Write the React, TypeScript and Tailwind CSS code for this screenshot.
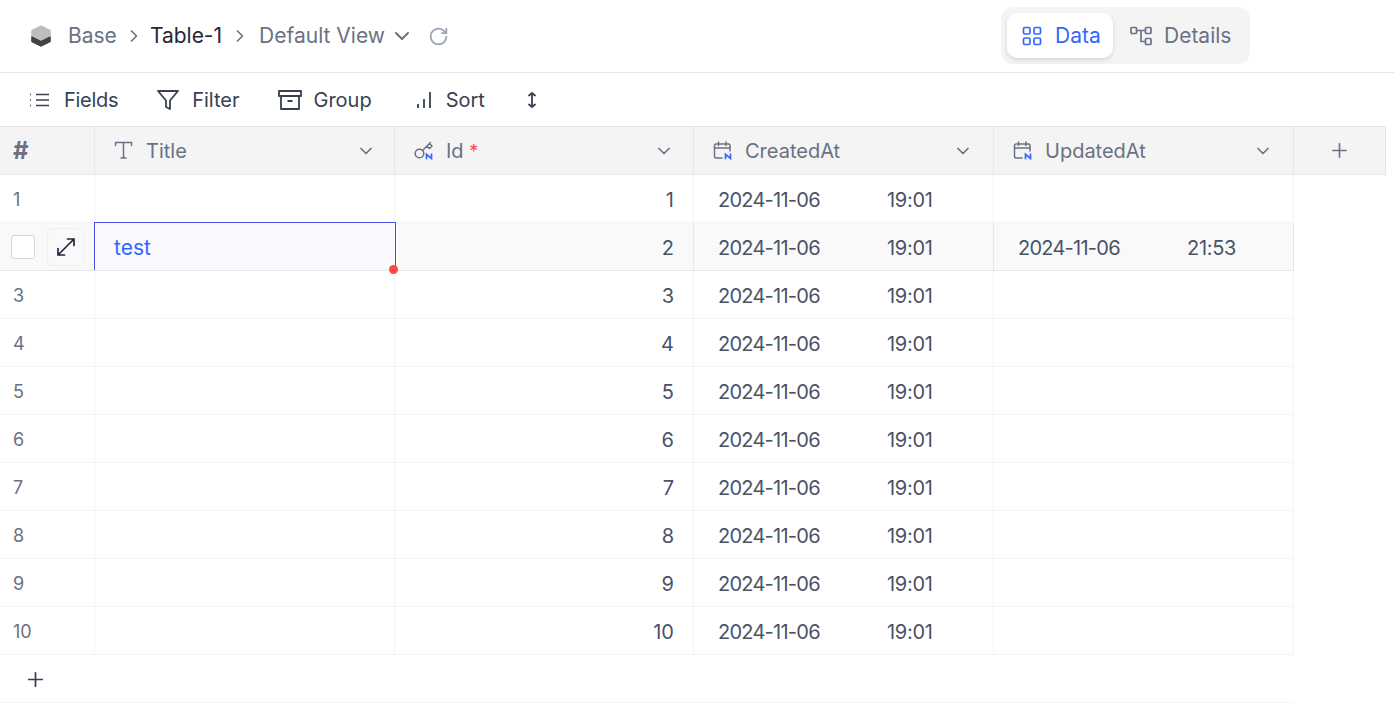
import type { ReactNode } from "react";
import { ChevronDown, ChevronRight, Plus, RotateCw } from "lucide-react";

const rows = [1, 2, 3, 4, 5, 6, 7, 8, 9, 10];

function TableIcon({ children }: { children: ReactNode }) {
  return (
    <svg width="22" height="22" viewBox="0 0 22 22" fill="none" stroke="#6a7184" strokeWidth="1.5" strokeLinecap="round" strokeLinejoin="round" className="shrink-0">
      {children}
    </svg>
  );
}

function BlueN() {
  return (
    <path d="M12.500 18.500v-4.200l5 4.200v-4.200" stroke="#3366ff" strokeWidth="1.700" strokeLinecap="square" strokeLinejoin="miter" />
  );
}

function CalendarIcon() {
  return (
    <TableIcon>
      <path d="M9 18H3a1.500 1.500 0 0 1-1.500-1.500v-11A1.500 1.500 0 0 1 3 4h12.500A1.500 1.500 0 0 1 17 5.500V11" />
      <path d="M5.500 2v3.500M13 2v3.500M1.500 8H17" />
      <BlueN />
    </TableIcon>
  );
}

function KeyIcon() {
  return (
    <TableIcon>
      <circle cx="5.500" cy="13.500" r="4.300" />
      <path d="M8.500 10.500l8-8M13 6l2.500 2.500 2.500-2.500-2.500-2.500" />
      <BlueN />
    </TableIcon>
  );
}

function TitleIcon() {
  return (
    <TableIcon>
      <path d="M1.500 5.500V2.500h16v3M9.500 2.500V18M7 18h5" />
    </TableIcon>
  );
}

function HeaderCell({ icon, className, children }: { icon: ReactNode; className: string; children: ReactNode }) {
  return (
    <div className={`flex h-full shrink-0 items-center border-r border-[#e7e7e9] pl-[19px] pt-[1px] ${className}`}>
      {icon}
      <div className="ml-[10px] flex-1 truncate text-[#6a7184]">{children}</div>
      <ChevronDown size={20} strokeWidth={2} className="text-[#6a7184]" />
    </div>
  );
}

function DateCell({ date, time, hover }: { date?: string; time?: string; hover?: boolean }) {
  return (
    <div className={`flex h-full w-[300px] shrink-0 items-center border-r pl-[24px] pt-[2px] text-[#4a5268] ${hover ? "border-[#e7e7e9]" : "border-[#f4f4f5]"}`}>
      {date && <span className="w-[169px] tracking-[-0.75px]">{date}</span>}
      {time && <span className="tracking-[-0.3px]">{time}</span>}
    </div>
  );
}

export default function App() {
  return (
    <div className="h-[704px] w-[1394px] overflow-hidden bg-white font-['Inter',sans-serif] text-[20px]">
      {/* top bar */}
      <div className="flex h-[73px] items-center border-b border-[#e7e7e9] pl-[31px] text-[21px]">
        <svg width="20" height="22" viewBox="0 0 20 22" className="shrink-0">
          <path d="M10 .8l9.200 4.500v11.400L10 21.200.8 16.700V5.300z" fill="#bdbdbd" stroke="#bdbdbd" strokeWidth="1" strokeLinejoin="round" />
          <path d="M.8 11.800l9.200 4.500 9.200-4.500v4.900L10 21.200.8 16.700z" fill="#424242" stroke="#424242" strokeWidth="1" strokeLinejoin="round" />
        </svg>
        <span className="ml-[17px] text-[#6a7184]">Base</span>
        <ChevronRight size={20} strokeWidth={2} className="ml-[7px] text-[#6a7184]" />
        <span className="ml-[6px] text-[#1f293a]">Table-1</span>
        <ChevronRight size={20} strokeWidth={2} className="ml-[8px] text-[#6a7184]" />
        <span className="ml-[9px] text-[#6a7184]">Default View</span>
        <ChevronDown size={24} strokeWidth={2} className="ml-[5px] text-[#6a7184]" />
        <RotateCw size={21} strokeWidth={2} className="ml-[14px] text-[#9aa2af]" />
        <div className="mb-[1px] ml-auto mr-[144px] flex h-[57px] w-[249px] items-center rounded-[12px] bg-[#f4f4f5] pl-[6px]">
          <div className="flex h-[45px] w-[106px] items-center rounded-[10px] bg-white pl-[15px] text-[#3366ff] shadow-[0_2px_4px_rgba(0,0,0,0.12)]">
            <svg width="20" height="20" viewBox="0 0 20 20" fill="none" stroke="#3366ff" strokeWidth="1.700" className="shrink-0">
              <rect x="1.500" y="1.500" width="6.500" height="6.500" rx="1.500" />
              <rect x="12" y="1.500" width="6.500" height="6.500" rx="1.500" />
              <rect x="1.500" y="12" width="6.500" height="6.500" rx="1.500" />
              <rect x="12" y="12" width="6.500" height="6.500" rx="1.500" />
            </svg>
            <span className="ml-[13px]">Data</span>
          </div>
          <div className="ml-[17px] flex items-center text-[#6a7184]">
            <svg width="22" height="20" viewBox="0 0 22 20" fill="none" stroke="#6a7184" strokeWidth="1.700" className="shrink-0">
              <rect x="1" y="1.500" width="5.500" height="6" rx="1" />
              <rect x="15.500" y="1.500" width="5.500" height="6" rx="1" />
              <rect x="15.500" y="12.500" width="5.500" height="6" rx="1" />
              <path d="M6.500 4.500h9M11 4.500V15.500h4.500" />
            </svg>
            <span className="ml-[12px]">Details</span>
          </div>
        </div>
      </div>

      {/* toolbar */}
      <div className="flex h-[53px] items-center pl-[29px] pt-[1px] text-[#374151]">
        <svg width="21" height="14" viewBox="0 0 21 14" fill="none" stroke="#374151" strokeWidth="1.600" className="shrink-0">
          <path d="M7 1.500h13M7 7h13M7 12.500h13" />
          <path d="M1 1.500h2M1 7h2M1 12.500h2" strokeDasharray="1 1" />
        </svg>
        <span className="ml-[14px] tracking-[-0.3px]">Fields</span>
        <svg width="24" height="22" viewBox="0 0 24 22" fill="none" stroke="#374151" strokeWidth="1.800" strokeLinejoin="round" className="ml-[38px] shrink-0">
          <path d="M2 2h20l-8 9.500V20l-4-2v-6.500z" />
        </svg>
        <span className="ml-[12px]">Filter</span>
        <svg width="24" height="22" viewBox="0 0 24 22" fill="none" stroke="#374151" strokeWidth="1.800" strokeLinejoin="round" className="ml-[38px] shrink-0">
          <rect x="1" y="2" width="22" height="5" />
          <path d="M3 7v13h18V7M9.500 12h5" />
        </svg>
        <span className="ml-[12px]">Group</span>
        <svg width="20" height="20" viewBox="0 0 20 20" fill="none" stroke="#374151" strokeWidth="1.800" className="ml-[41px] shrink-0">
          <path d="M5 18v-4M11 18v-9M17 18V2" />
        </svg>
        <span className="ml-[13px]">Sort</span>
        <svg width="12" height="20" viewBox="0 0 12 20" fill="none" stroke="#374151" strokeWidth="1.800" strokeLinecap="round" strokeLinejoin="round" className="ml-[41px] shrink-0">
          <path d="M6 3v14M3 5.500L6 3l3 2.500M3 14.500L6 17l3-2.500" />
        </svg>
      </div>

      {/* header row */}
      <div className="flex h-[49px] w-[1386px] border-y border-[#e7e7e9] bg-[#f4f4f5]">
        <div className="flex h-full w-[95px] shrink-0 items-center border-r border-[#e7e7e9] pl-[13px] text-[24px] font-bold text-[#6a7184]">#</div>
        <HeaderCell icon={<TitleIcon />} className="w-[300px] pr-[18px]">Title</HeaderCell>
        <HeaderCell icon={<KeyIcon />} className="w-[299px] pr-[19px]">
          Id <span className="text-[18px] text-[#ff4a3f]">*</span>
        </HeaderCell>
        <HeaderCell icon={<CalendarIcon />} className="w-[300px] pr-[20px]">CreatedAt</HeaderCell>
        <HeaderCell icon={<CalendarIcon />} className="w-[300px] pr-[20px]">UpdatedAt</HeaderCell>
        <div className="flex h-full flex-1 items-center justify-center border-r border-[#e7e7e9]">
          <Plus size={23} strokeWidth={1.700} className="text-[#6a7184]" />
        </div>
      </div>

      {/* rows */}
      <div className="w-[1294px] text-[#4a5268]">
        {rows.map((n) => {
          const active = n === 2;
          const line = active ? "border-[#e7e7e9]" : "border-[#f4f4f5]";
          return (
            <div key={n} className={`flex h-[48px] border-b ${line} ${active ? "bg-[#f9f9fa]" : ""}`}>
              <div className={`flex h-full w-[95px] shrink-0 items-center border-r ${line} ${active ? "pl-[11px]" : "pl-[13px] pt-[2px]"} text-[18px] text-[#6a7184]`}>
                {active ? (
                  <>
                    <div className="h-[24px] w-[24px] rounded-[3px] border border-[#d5d5d9] bg-white" />
                    <div className="ml-[12px] flex h-[38px] w-[38px] items-center justify-center rounded-[6px] border border-[#f0f0f1]">
                      <svg width="20" height="20" viewBox="0 0 20 20" fill="none" stroke="#1f293a" strokeWidth="1.700" strokeLinecap="round" strokeLinejoin="round">
                        <path d="M2 18L18 2M11.500 2H18v6.500M2 11.500V18h6.500" />
                      </svg>
                    </div>
                  </>
                ) : (
                  n
                )}
              </div>
              {active ? (
                <div className="relative z-10 -ml-[1px] -mr-[1px] -mt-[1px] flex h-[48px] w-[302px] shrink-0 items-center border-x border-t border-[#4351e8] bg-[#f9f9fe] pl-[19px] pt-[2px] text-[21px] text-[#3366ff]">
                  test
                  <span className="absolute -bottom-[4px] -right-[3px] h-[9px] w-[9px] rounded-full bg-[#ff4a3f]" />
                </div>
              ) : (
                <div className={`h-full w-[300px] shrink-0 border-r ${line}`} />
              )}
              <div className={`flex h-full w-[299px] shrink-0 items-center justify-end border-r ${line} pr-[19px] pt-[2px]`}>{n}</div>
              <DateCell date="2024-11-06" time="19:01" hover={active} />
              {active ? <DateCell date="2024-11-06" time="21:53" hover /> : <DateCell />}
            </div>
          );
        })}
        <div className="flex h-[48px] items-center border-b border-[#f4f4f5] pl-[24px] pt-[2px]">
          <Plus size={23} strokeWidth={1.800} className="text-[#374151]" />
        </div>
      </div>
    </div>
  );
}
